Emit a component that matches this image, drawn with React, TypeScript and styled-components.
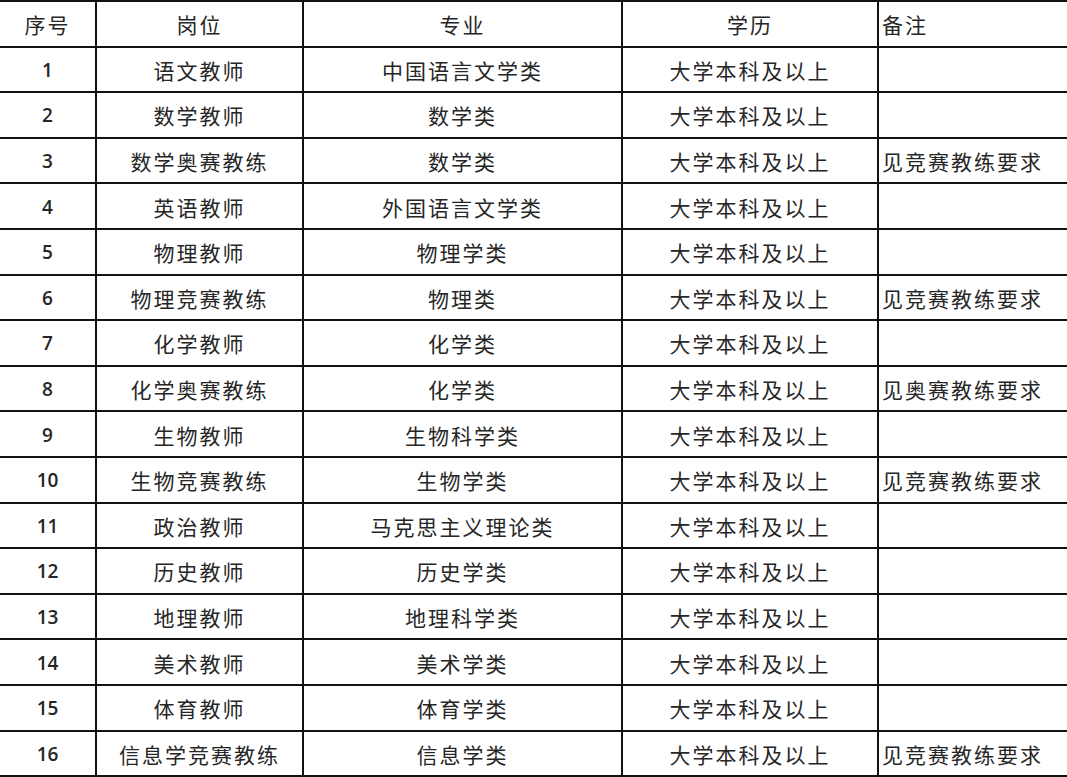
import React from "react";
import styled, { createGlobalStyle } from "styled-components";

const Global = createGlobalStyle`
  html, body { margin: 0; padding: 0; background: #ffffff; }
  body { width: 1067px; height: 777px; overflow: hidden; }
`;

const Grid = styled.div`
  display: grid;
  grid-template-columns: 97px 207px 319px 256px 1fr;
  grid-template-rows: repeat(17, 45.6px);
  width: 1067px;
  border-top: 2px solid #111;
  background: #fff;
  font-family: "Noto Sans CJK SC", "Noto Sans", sans-serif;
  color: #262626;
`;

const Cell = styled.div<{ $align?: "left" | "center"; $last?: boolean; $num?: boolean }>`
  display: flex;
  align-items: center;
  justify-content: ${(p) => (p.$align === "left" ? "flex-start" : "center")};
  padding-left: ${(p) => (p.$align === "left" ? "3px" : "0")};
  padding-top: 1px;
  box-sizing: border-box;
  border-bottom: 2px solid #111;
  border-right: ${(p) => (p.$last ? "none" : "2px solid #111")};
  font-size: ${(p) => (p.$num ? "19px" : "21px")};
  font-family: ${(p) =>
    p.$num ? `"Open Sans", "Liberation Sans", sans-serif` : `"Noto Sans CJK SC", "Noto Sans", sans-serif`};
  font-weight: ${(p) => (p.$num ? 600 : 400)};
  letter-spacing: ${(p) => (p.$num ? "0" : "2px")};
  white-space: nowrap;
  overflow: hidden;
`;

type Row = [string, string, string, string, string];

const header: Row = ["序号", "岗位", "专业", "学历", "备注"];

const rows: Row[] = [
  ["1", "语文教师", "中国语言文学类", "大学本科及以上", ""],
  ["2", "数学教师", "数学类", "大学本科及以上", ""],
  ["3", "数学奥赛教练", "数学类", "大学本科及以上", "见竞赛教练要求"],
  ["4", "英语教师", "外国语言文学类", "大学本科及以上", ""],
  ["5", "物理教师", "物理学类", "大学本科及以上", ""],
  ["6", "物理竞赛教练", "物理类", "大学本科及以上", "见竞赛教练要求"],
  ["7", "化学教师", "化学类", "大学本科及以上", ""],
  ["8", "化学奥赛教练", "化学类", "大学本科及以上", "见奥赛教练要求"],
  ["9", "生物教师", "生物科学类", "大学本科及以上", ""],
  ["10", "生物竞赛教练", "生物学类", "大学本科及以上", "见竞赛教练要求"],
  ["11", "政治教师", "马克思主义理论类", "大学本科及以上", ""],
  ["12", "历史教师", "历史学类", "大学本科及以上", ""],
  ["13", "地理教师", "地理科学类", "大学本科及以上", ""],
  ["14", "美术教师", "美术学类", "大学本科及以上", ""],
  ["15", "体育教师", "体育学类", "大学本科及以上", ""],
  ["16", "信息学竞赛教练", "信息学类", "大学本科及以上", "见竞赛教练要求"],
];

export default function App() {
  return (
    <>
      <Global />
      <Grid>
        {header.map((h, i) => (
          <Cell key={`h${i}`} $align={i === 4 ? "left" : "center"} $last={i === 4}>
            {h}
          </Cell>
        ))}
        {rows.map((r, ri) =>
          r.map((c, ci) => (
            <Cell
              key={`${ri}-${ci}`}
              $align={ci === 4 ? "left" : "center"}
              $last={ci === 4}
              $num={ci === 0}
            >
              {c}
            </Cell>
          ))
        )}
      </Grid>
    </>
  );
}
